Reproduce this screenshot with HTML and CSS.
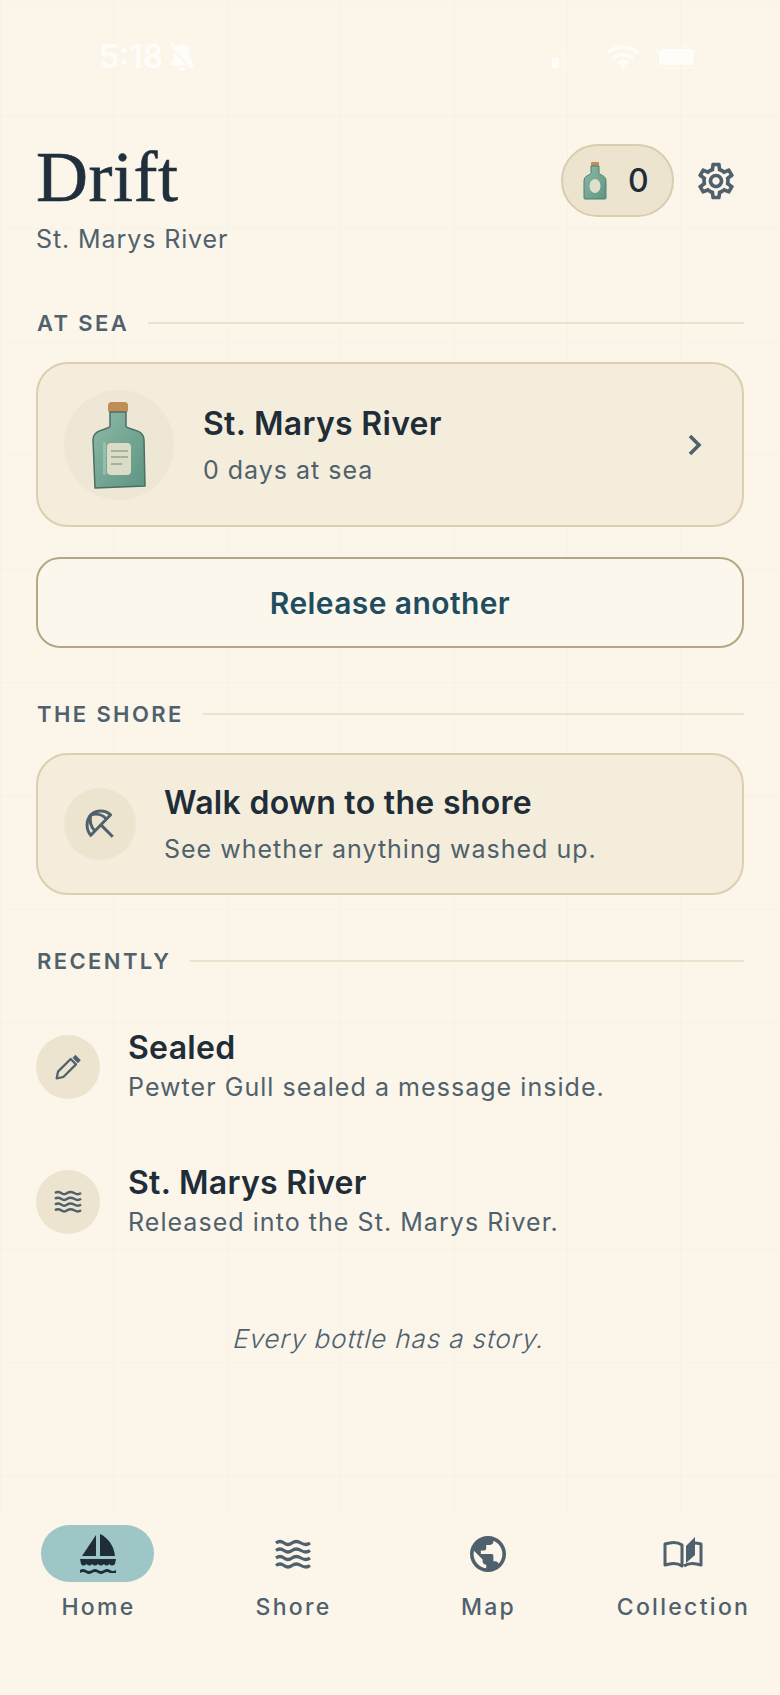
FILE: index.html
```html
<!DOCTYPE html>
<html lang="en">
<head>
  <meta charset="UTF-8">
  <meta name="viewport" content="width=device-width, initial-scale=1.0">
  <title>Drift</title>
  <link rel="stylesheet" href="styles.css">
</head>
<body>
  <svg class="defs" width="0" height="0" aria-hidden="true">
    <defs>
      <linearGradient id="glass" x1="0" y1="0" x2="1" y2="1">
        <stop offset="0" stop-color="#8dbaa6"/>
        <stop offset="1" stop-color="#5f9483"/>
      </linearGradient>
      <symbol id="waves" viewBox="0 0 36 30">
        <path d="M1 4q4-3 8 0t8 0 9 0 9 0M1 11.500q4-3 8 0t8 0 9 0 9 0M1 19q4-3 8 0t8 0 9 0 9 0M1 26.500q4-3 8 0t8 0 9 0 9 0" fill="none" stroke="currentColor" stroke-width="3.200"/>
      </symbol>
    </defs>
  </svg>

  <main class="screen">
    <div class="status">
      <div class="status-left">
        <span class="clock">5:18</span>
        <svg class="bell" viewBox="0 0 28 28" width="30" height="30">
          <path d="M14 2c-5 0-7 4-7 8 0 6-3 9-4 11v1h22v-1c-1-2-4-5-4-11 0-4-2-8-7-8zM11 24a3 3 0 0 0 6 0z" fill="currentColor"/>
          <path d="M3 2l22 24" stroke="#fbf5ea" stroke-width="4"/>
          <path d="M4 2l21 23" stroke="currentColor" stroke-width="2.500"/>
        </svg>
      </div>
      <div class="status-right">
        <svg viewBox="0 0 39 24" width="39" height="24">
          <rect x="0" y="13" width="7" height="10" rx="1" fill="currentColor"/>
          <rect x="11" y="9" width="6" height="14" rx="1" fill="currentColor" opacity=".25"/>
          <rect x="21" y="5" width="6" height="18" rx="1" fill="currentColor" opacity=".25"/>
          <rect x="31" y="1" width="6" height="22" rx="1" fill="currentColor" opacity=".25"/>
        </svg>
        <svg viewBox="0 0 34 24" width="34" height="24">
          <path d="M2 8a22 22 0 0 1 30 0M7 13.500a15 15 0 0 1 20 0M12 18.500a8 8 0 0 1 10 0" fill="none" stroke="currentColor" stroke-width="3.500"/>
          <path d="M14 20.500l3 3.500 3-3.500a4 4 0 0 0-6 0z" fill="currentColor"/>
        </svg>
        <svg viewBox="0 0 50 24" width="50" height="24">
          <rect x="1" y="1" width="44" height="22" rx="7" fill="none" stroke="currentColor" stroke-width="2" opacity=".35"/>
          <rect x="4" y="4" width="35" height="16" rx="4" fill="currentColor"/>
          <path d="M47 8v8q3-1 3-4t-3-4z" fill="currentColor" opacity=".35"/>
        </svg>
      </div>
    </div>

    <header class="top">
      <div>
        <h1 class="title">Drift</h1>
        <p class="place">St. Marys River</p>
      </div>
      <div class="top-actions">
        <div class="count">
          <svg viewBox="0 0 24 38" width="24" height="38">
            <rect x="8" y="0" width="8" height="5" rx="1" fill="#bf8d55"/>
            <path d="M8 4h8v7c0 2 7 2 7 8v17a1 1 0 0 1-1 1H2a1 1 0 0 1-1-1V19c0-6 7-6 7-8z" fill="url(#glass)" stroke="#4f7e70"/>
            <ellipse cx="12" cy="24" rx="5.500" ry="7" fill="#dde0cc"/>
          </svg>
          <span class="count-num">0</span>
        </div>
        <svg class="gear" viewBox="0 0 24 24" width="44" height="44"><path fill="currentColor" d="M19.430 12.980c.040-.320.070-.640.070-.980 0-.340-.030-.660-.070-.980l2.110-1.650c.190-.150.240-.420.120-.640l-2-3.460c-.090-.160-.260-.250-.440-.250-.060 0-.120.010-.170.030l-2.490 1c-.520-.400-1.080-.730-1.690-.980l-.380-2.650C14.460 2.180 14.250 2 14 2h-4c-.250 0-.460.180-.490.420l-.380 2.650c-.610.250-1.170.590-1.690.980l-2.490-1c-.060-.020-.120-.030-.180-.030-.170 0-.340.090-.430.250l-2 3.460c-.130.220-.070.490.120.640l2.110 1.650c-.040.320-.070.650-.070.980 0 .330.030.660.070.980l-2.110 1.650c-.190.150-.240.420-.120.640l2 3.460c.090.160.260.250.440.250.060 0 .120-.010.170-.030l2.490-1c.520.400 1.080.730 1.690.980l.380 2.650c.030.240.240.420.490.420h4c.250 0 .460-.180.490-.420l.380-2.650c.610-.250 1.170-.590 1.690-.980l2.490 1c.060.020.120.030.180.030.170 0 .340-.090.430-.250l2-3.460c.120-.220.070-.490-.120-.640l-2.110-1.650zm-1.980-1.710c.040.310.050.520.050.730 0 .210-.020.430-.050.730l-.140 1.130.890.700 1.080.840-.700 1.210-1.270-.510-1.040-.420-.900.680c-.430.320-.840.560-1.250.730l-1.060.430-.160 1.130-.200 1.350h-1.400l-.190-1.350-.160-1.130-1.060-.430c-.430-.180-.830-.410-1.230-.710l-.910-.700-1.060.430-1.270.510-.700-1.210 1.080-.840.890-.700-.140-1.130c-.030-.310-.050-.540-.050-.740s.020-.430.050-.730l.140-1.130-.890-.700-1.080-.840.700-1.210 1.270.510 1.040.420.900-.680c.430-.320.840-.560 1.250-.730l1.060-.430.160-1.130.200-1.350h1.390l.190 1.350.160 1.130 1.060.430c.430.180.830.410 1.230.710l.910.700 1.060-.430 1.270-.510.700 1.210-1.070.850-.890.700.140 1.130zM12 8c-2.210 0-4 1.790-4 4s1.790 4 4 4 4-1.790 4-4-1.790-4-4-4zm0 6c-1.100 0-2-.900-2-2s.900-2 2-2 2 .900 2 2-.900 2-2 2z"/></svg>
      </div>
    </header>

    <div class="section-head"><span>AT SEA</span></div>
    <div class="card card-sea">
      <div class="bottle-disc">
        <svg viewBox="0 0 54 88" width="54" height="88">
          <rect x="16" y="1" width="20" height="11" rx="3.500" fill="#bf8d55"/>
          <path d="M18 11h16v14c0 4 18 2 18 14l1 46-50 2L1 39c0-12 17-10 17-14z" fill="url(#glass)" stroke="#4a6f66" stroke-width="1.500" stroke-linejoin="round"/>
          <rect x="11" y="41" width="3" height="33" rx="1.500" fill="#a9cdbb" opacity=".6"/>
          <rect x="15" y="42" width="24" height="32" rx="4" fill="#dadcc6"/>
          <path d="M19 50h17M19 56h17M19 63h11" stroke="#8fa699" stroke-width="1.500"/>
        </svg>
      </div>
      <div class="card-text">
        <div class="card-title">St. Marys River</div>
        <div class="card-sub">0 days at sea</div>
      </div>
      <svg class="chevron" viewBox="0 0 16 24" width="16" height="24"><path d="M3 3l9 9-9 9" fill="none" stroke="currentColor" stroke-width="3.600"/></svg>
    </div>

    <button class="release">Release another</button>

    <div class="section-head"><span>THE SHORE</span></div>
    <div class="card card-shore">
      <div class="disc disc-lg">
        <svg viewBox="0 0 24 24" width="34" height="34" fill="none" stroke="currentColor" stroke-width="2.100">
          <path d="M13 13l8 8"/>
          <path d="M5.500 5.500C9.500 2 15.500 2 19.500 5.500L5.500 20C2 16 2 9.500 5.500 5.500z" stroke-linejoin="round"/>
          <path d="M5.500 5.500C4.500 9.500 5.500 14 8.500 17M5.500 5.500C9.500 4.500 14 5.500 16.500 8.500"/>
        </svg>
      </div>
      <div class="card-text">
        <div class="card-title">Walk down to the shore</div>
        <div class="card-sub">See whether anything washed up.</div>
      </div>
    </div>

    <div class="section-head recent-head"><span>RECENTLY</span></div>
    <div class="activity">
      <div class="disc">
        <svg viewBox="0 0 24 24" width="32" height="32" fill="none" stroke="currentColor" stroke-width="1.700" stroke-linejoin="round">
          <path d="M3.500 20.500l1-5L14 6l4 4-9.500 9.500z"/>
          <path d="M16.500 4l4 4" stroke-width="3.200"/>
        </svg>
      </div>
      <div>
        <div class="activity-title">Sealed</div>
        <div class="activity-sub">Pewter Gull sealed a message inside.</div>
      </div>
    </div>
    <div class="activity">
      <div class="disc">
        <svg width="28" height="23"><use href="#waves"/></svg>
      </div>
      <div>
        <div class="activity-title">St. Marys River</div>
        <div class="activity-sub">Released into the St. Marys River.</div>
      </div>
    </div>

    <p class="tagline"><span>Every bottle has a story.</span></p>
  </main>

  <nav class="tabs">
    <div class="tab">
      <div class="tab-icon active">
        <svg viewBox="0 0 36 40" width="36" height="40" fill="currentColor">
          <path d="M16 1v21H2zM20 0c7 3 14 11 15 22H20z"/>
          <path d="M0 25h36l-1 5c-2 2-4 2-5.500 0-2 2-4 2-5.500 0-2 2-4 2-6 0-2 2-4 2-6 0-1.500 2-3.500 2-5.500 0-2 2-4 2-5.500 0z"/>
          <path d="M0 39v-3q3-2 6 0t6 0 6 0 6 0 6 0 6 0v3h-6q-3-2-6 0t-6 0-6 0-6 0-6 0z"/>
        </svg>
      </div>
      <span class="tab-label">Home</span>
    </div>
    <div class="tab">
      <div class="tab-icon"><svg width="36" height="30"><use href="#waves"/></svg></div>
      <span class="tab-label">Shore</span>
    </div>
    <div class="tab">
      <div class="tab-icon">
        <svg viewBox="2 2 20 20" width="36" height="36"><path fill="currentColor" d="M12 2C6.480 2 2 6.480 2 12s4.480 10 10 10 10-4.480 10-10S17.520 2 12 2zm-1 17.930c-3.950-.490-7-3.850-7-7.930 0-.620.080-1.210.210-1.790L9 15v1c0 1.100.900 2 2 2v1.930zm6.900-2.540c-.260-.810-1-1.390-1.900-1.390h-1v-3c0-.550-.450-1-1-1H8v-2h2c.550 0 1-.450 1-1V7h2c1.100 0 2-.900 2-2v-.410c2.930 1.190 5 4.060 5 7.410 0 2.080-.800 3.970-2.100 5.390z"/></svg>
      </div>
      <span class="tab-label">Map</span>
    </div>
    <div class="tab">
      <div class="tab-icon">
        <svg viewBox="0 0 40 34" width="40" height="34">
          <path d="M19 29C15 26 8 26 2 28V7c6-2 13-2 17 1zM32 6c2 0 4 .500 6 1v21c-6-2-13-2-17 1" fill="none" stroke="currentColor" stroke-width="3" stroke-linejoin="round"/>
          <path d="M23 9l9-9v18l-9 8z" fill="currentColor"/>
        </svg>
      </div>
      <span class="tab-label">Collection</span>
    </div>
  </nav>
</body>
</html>
```

FILE: styles.css
```css
:root { --bg: #fbf5ea; --ink: #1e2d38; --muted: #4f616c; --sand: #ede4d0; --rule: #ebe2cd; --card: #f5eddb; --card-line: #dccfb0; }
* { box-sizing: border-box; }
html, body { margin: 0; height: 100%; }
body { display: flex; flex-direction: column; width: 780px; height: 1695px; background: var(--bg); color: var(--ink); font-family: Inter, "Noto Sans", sans-serif; overflow: hidden; }
.defs { position: absolute; }

.screen {
  flex: 1;
  padding: 0 36px;
  background-image: linear-gradient(#f8f2e6 1px, transparent 1px), linear-gradient(90deg, #f8f2e6 1px, transparent 1px);
  background-size: 113.4px 113.4px;
  background-position: 0 1.6px;
}

.status { display: flex; justify-content: space-between; align-items: center; height: 114px; padding: 0 39px 0 63px; color: #fffdf9; }
.status-left { display: flex; align-items: center; gap: 4px; margin-top: -1px; }
.status-right { display: flex; align-items: center; gap: 15px; margin-top: -1px; }
.clock { font-size: 32px; font-weight: 600; }

.top { display: flex; justify-content: space-between; align-items: flex-start; height: 197px; }
.title { margin: 22px 0 0; font-family: "Liberation Serif", serif; font-size: 72px; font-weight: 400; line-height: 82px; letter-spacing: .5px; color: #1f2f3b; -webkit-text-stroke: .6px #1f2f3b; }
.place { margin: 5px 0 0; font-size: 25px; line-height: 32px; letter-spacing: .9px; color: var(--muted); }
.top-actions { display: flex; align-items: center; gap: 20px; margin: 30px 6px 0 0; }
.count { display: flex; align-items: center; gap: 21px; width: 113px; height: 73px; padding-left: 20px; background: var(--sand); border: 2px solid #d9cdae; border-radius: 37px; }
.count-num { font-size: 32px; font-weight: 500; }
.gear { color: var(--muted); }

.section-head { display: flex; align-items: center; gap: 19px; height: 24px; margin-bottom: 27px; padding-left: 1px; font-size: 22px; font-weight: 600; letter-spacing: 2.4px; color: var(--muted); }
.section-head::after { content: ""; flex: 1; height: 2px; background: var(--rule); }

.card { display: flex; align-items: center; background: var(--card); border: 2px solid var(--card-line); border-radius: 32px; }
.card-sea { height: 165px; padding-left: 26px; }
.card-shore { height: 142px; padding-left: 26px; }
.bottle-disc { display: flex; justify-content: center; align-items: center; width: 110px; height: 110px; border-radius: 50%; background: #eee7d6; }
.card-sea .card-text { margin-left: 29px; flex: 1; }
.card-shore .card-text { margin-left: 28px; }
.card-title { font-size: 32px; font-weight: 600; line-height: 42px; letter-spacing: .3px; }
.card-sub { margin-top: 8px; font-size: 25px; line-height: 34px; letter-spacing: 1px; color: var(--muted); }
.chevron { margin-right: 39px; color: var(--muted); }

.release { display: block; width: 100%; height: 91px; margin: 30px 0 54px; background: #fcf7ec; border: 2px solid #b5a783; border-radius: 24px; color: #1f4d5f; font-family: inherit; font-size: 30px; font-weight: 600; letter-spacing: .4px; }

.disc { display: flex; flex: none; justify-content: center; align-items: center; width: 64px; height: 64px; border-radius: 50%; background: var(--sand); color: var(--muted); }
.disc-lg { width: 72px; height: 72px; }

.recent-head { margin: 54px 0 0; }
.activity { display: flex; align-items: center; gap: 28px; height: 135px; }
.recent-head + .activity { margin-top: 26px; }
.activity-title { font-size: 32px; font-weight: 600; line-height: 40px; letter-spacing: .3px; }
.activity-sub { margin-top: 1px; font-size: 25px; line-height: 36px; letter-spacing: 1.05px; color: var(--muted); }

.tagline { margin: 54px 0 0; text-align: center; font-size: 26px; font-weight: 300; letter-spacing: .9px; color: var(--muted); }
.tagline span { display: inline-block; transform: skewX(-14deg); }

.tabs { display: grid; grid-template-columns: repeat(4, 195px); height: 183px; padding-top: 13px; background: var(--bg); }
.tab { display: flex; flex-direction: column; align-items: center; }
.tab-icon { display: flex; justify-content: center; align-items: center; width: 113px; height: 57px; border-radius: 29px; color: var(--muted); }
.tab-icon.active { background: #9fc6c7; color: var(--ink); }
.tab-label { margin: 10px 0 0 2px; font-size: 23px; font-weight: 500; line-height: 30px; letter-spacing: 2.3px; color: var(--muted); }
```
